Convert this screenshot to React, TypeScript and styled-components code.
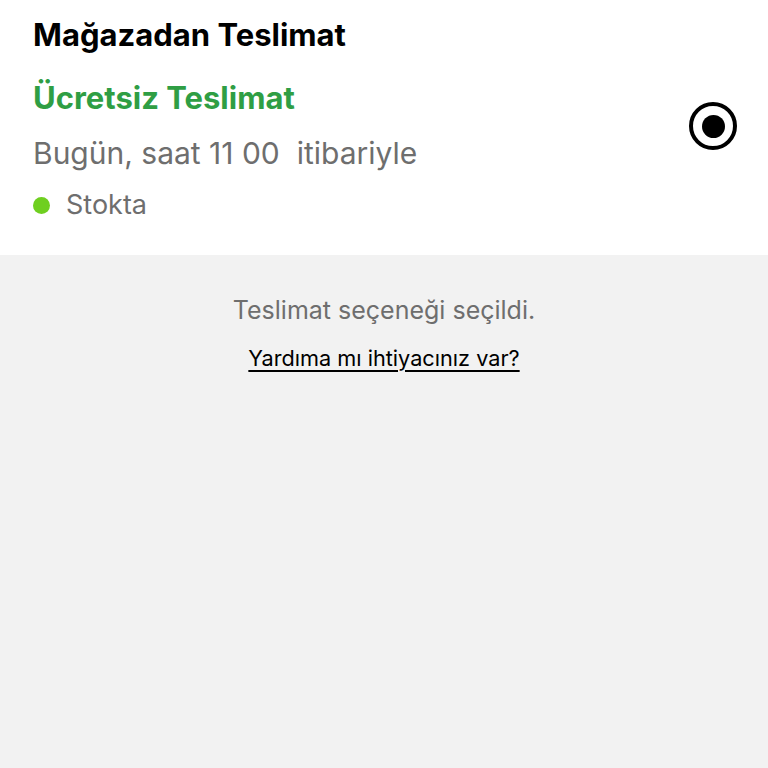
import React, { FC } from 'react';
import styled, { createGlobalStyle } from 'styled-components';

const GlobalStyle = createGlobalStyle`
    html, body {
        margin: 0;
        padding: 0;
        background: #f2f2f2;
    }
    body {
        font-family: Inter, "Noto Sans", sans-serif;
    }
`;

interface RadioProps {
    checked?: boolean
}

const App: FC = () => {
    return (
        <Page>
            <GlobalStyle />
            <OptionCard>
                <OptionInfo>
                    <Title>Mağazadan Teslimat</Title>
                    <Price>Ücretsiz Teslimat</Price>
                    <When>Bugün, saat 11 00&nbsp; itibariyle</When>
                    <Stock>
                        <StockDot />
                        <span>Stokta</span>
                    </Stock>
                </OptionInfo>
                <Radio checked />
            </OptionCard>
            <Footer>
                <Notice>Teslimat seçeneği seçildi.</Notice>
                <HelpLink href="#">Yardıma mı ihtiyacınız var?</HelpLink>
            </Footer>
        </Page>
    )
}

const Page = styled.div`
    width: 768px;
    min-height: 768px;
    background: #f2f2f2;
`;

const OptionCard = styled.div`
    background: #fff;
    height: 255px;
    box-sizing: border-box;
    padding: 16px 31px 0 33px;
    display: flex;
    justify-content: space-between;
    align-items: flex-start;
`;

const OptionInfo = styled.div`
    display: flex;
    flex-direction: column;
`;

const Title = styled.div`
    font-size: 31px;
    font-weight: 700;
    color: #000;
    line-height: 38px;
`;

const Price = styled.div`
    margin-top: 25px;
    font-size: 31px;
    font-weight: 700;
    color: #2f9e44;
    line-height: 38px;
`;

const When = styled.div`
    margin-top: 17px;
    font-size: 30px;
    font-weight: 400;
    color: #6e6e6e;
    line-height: 38px;
`;

const Stock = styled.div`
    margin-top: 16px;
    display: flex;
    align-items: center;
    gap: 16px;
    font-size: 27px;
    color: #6e6e6e;
    line-height: 34px;
`;

const StockDot = styled.span`
    width: 17px;
    height: 17px;
    border-radius: 50%;
    background: #6fcf20;
`;

const Radio = styled.span<RadioProps>`
    margin-top: 86px;
    width: 48px;
    height: 48px;
    box-sizing: border-box;
    border: 4px solid #000;
    border-radius: 50%;
    display: flex;
    align-items: center;
    justify-content: center;

    &::after {
        content: '';
        width: 23px;
        height: 23px;
        border-radius: 50%;
        background: ${(p) => (p.checked ? '#000' : 'transparent')};
    }
`;

const Footer = styled.div`
    display: flex;
    flex-direction: column;
    align-items: center;
    padding-top: 38px;
`;

const Notice = styled.div`
    font-size: 25px;
    color: #6e6e6e;
    line-height: 34px;
`;

const HelpLink = styled.a`
    margin-top: 17px;
    font-size: 21.7px;
    color: #000;
    line-height: 28px;
    text-decoration: underline;
    text-underline-offset: 4px;
`;

export default App;
